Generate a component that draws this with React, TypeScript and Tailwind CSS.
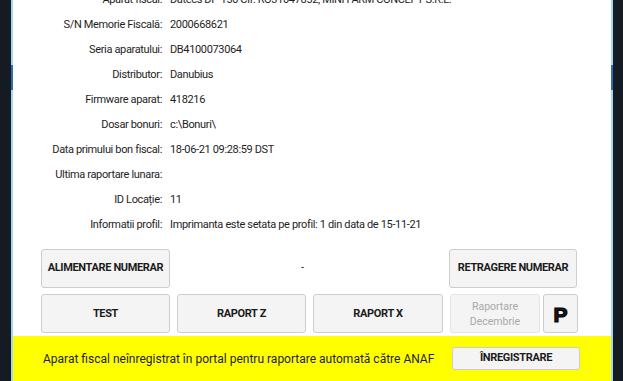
const rows: [string, string][] = [
  ["Aparat fiscal:", "Datecs DP-150 Cif: RO31047852, MINI FARM CONCEPT S.R.L."],
  ["S/N Memorie Fiscală:", "2000668621"],
  ["Seria aparatului:", "DB4100073064"],
  ["Distributor:", "Danubius"],
  ["Firmware aparat:", "418216"],
  ["Dosar bonuri:", "c:\\Bonuri\\"],
  ["Data primului bon fiscal:", "18-06-21 09:28:59 DST"],
  ["Ultima raportare lunara:", ""],
  ["ID Locație:", "11"],
  ["Informatii profil:", "Imprimanta este setata pe profil: 1 din data de 15-11-21"],
];

function Btn({ className = "", children, disabled = false }: { className?: string; children: React.ReactNode; disabled?: boolean }) {
  return (
    <button
      className={`flex items-center justify-center rounded-[3px] border bg-[#f4f4f4] ${
        disabled
          ? "border-[#e4e4e4] text-[10.5px] font-normal leading-[15px] text-[#a9a9a9]"
          : "border-[#cdcdcd] text-[11px] font-bold tracking-[-0.35px] text-[#1b1b1b]"
      } ${className}`}
    >
      {children}
    </button>
  );
}

function Edge() {
  return (
    <div className="flex w-[2px] shrink-0 flex-col bg-[#a6d6ef]">
      <div className="h-[65px]" />
      <div className="h-[25px] bg-[#2f6db3]" />
    </div>
  );
}

export default function App() {
  return (
    <div className="flex h-[381px] w-[623px] overflow-hidden bg-[#141b22] font-['Roboto',sans-serif]">
      <div className="w-[11px] shrink-0" />
      <Edge />
      <div className="flex w-[598px] shrink-0 flex-col bg-white">
        <div className="-mt-[12px] flex flex-col">
          {rows.map(([label, value]) => (
            <div key={label} className="flex h-[25px] items-center text-[11px] tracking-[-0.35px] text-[#1e1e1e]">
              <div className="w-[149px] shrink-0 text-right">{label}</div>
              <div className="pl-[8px] whitespace-nowrap">{value}</div>
            </div>
          ))}
        </div>

        <div className="mt-[11px] flex flex-col gap-[6px] pl-[28px]">
          <div className="flex h-[39px] items-center">
            <Btn className="h-full w-[129px]">ALIMENTARE NUMERAR</Btn>
            <div className="flex-1 pr-[14px] text-center text-[11px] text-[#1e1e1e]">-</div>
            <Btn className="mr-[34px] h-full w-[128px]">RETRAGERE NUMERAR</Btn>
          </div>
          <div className="flex h-[39px] gap-[7px]">
            <Btn className="w-[129px] pt-[2px]">TEST</Btn>
            <Btn className="w-[129px] pt-[2px]">RAPORT Z</Btn>
            <Btn className="w-[130px] pt-[2px]">RAPORT X</Btn>
            <Btn className="w-[90px] flex-col" disabled>
              <span>Raportare</span>
              <span>Decembrie</span>
            </Btn>
            <Btn className="-ml-[4px] w-[35px] pt-[2px] font-['Liberation_Sans',sans-serif] text-[21px] font-black tracking-normal [-webkit-text-stroke:1.2px_#000]">
              P
            </Btn>
          </div>
        </div>

        <div className="mt-auto flex h-[45px] items-center bg-[#ffff00] pl-[30px]">
          <span className="whitespace-nowrap text-[12px] text-[#1e1e1e]">
            Aparat fiscal neînregistrat în portal pentru raportare automată către ANAF
          </span>
          <Btn className="ml-auto mr-[31px] h-[23px] w-[128px]">ÎNREGISTRARE</Btn>
        </div>
      </div>
      <Edge />
      <div className="flex-1" />
    </div>
  );
}
